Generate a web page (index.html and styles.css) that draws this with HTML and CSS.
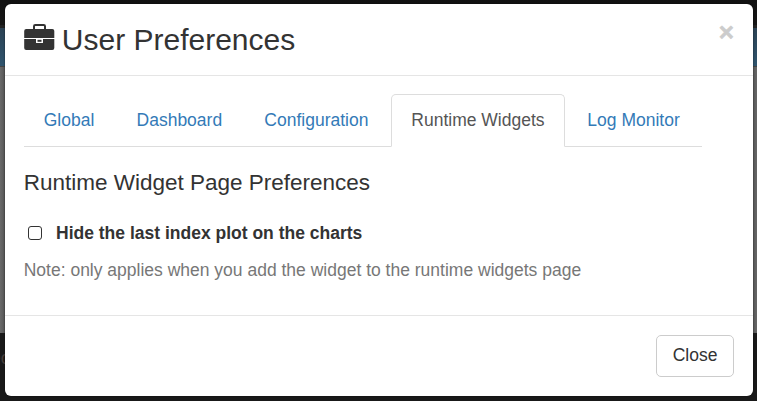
FILE: index.html
```html
<!DOCTYPE html>
<html lang="en">
<head>
<meta charset="utf-8">
<title>User Preferences</title>
<link rel="stylesheet" href="styles.css">
</head>
<body>
<div class="backdrop" aria-hidden="true">
  <div class="band-top"></div>
  <div class="band-blue"></div>
  <div class="band-page"></div>
  <div class="band-footer">ec</div>
</div>
<div class="modal" role="dialog">
  <header class="modal-header">
    <svg class="briefcase" viewBox="0 0 31 28" aria-hidden="true">
      <path d="M10 7V3.3Q10 2 11.3 2H19.7Q21 2 21 3.3V7" fill="none" stroke="#333" stroke-width="2"/>
      <path d="M2.2 6H28.3Q30.3 6 30.3 8V15H.2V8Q.2 6 2.2 6Z"/>
      <path d="M.2 16H12V20H19V16H30.3V25Q30.3 27 28.3 27H2.2Q.2 27 .2 25Z"/>
      <path d="M13.5 16.8H17.5V18.8H13.5Z"/>
    </svg>
    <h3 class="modal-title">User Preferences</h3>
    <button class="dismiss" aria-label="Dismiss">×</button>
  </header>
  <div class="modal-body">
    <nav class="tabs">
      <a class="tab">Global</a>
      <a class="tab">Dashboard</a>
      <a class="tab">Configuration</a>
      <a class="tab active">Runtime Widgets</a>
      <a class="tab">Log Monitor</a>
    </nav>
    <h4 class="section-title">Runtime Widget Page Preferences</h4>
    <label class="option"><input class="check" type="checkbox"><span>Hide the last index plot on the charts</span></label>
    <p class="note">Note: only applies when you add the widget to the runtime widgets page</p>
  </div>
  <footer class="modal-footer"><button class="close-button">Close</button></footer>
</div>
</body>
</html>
```
FILE: styles.css
```css
* { box-sizing: border-box; }
body {
  margin: 0;
  height: 401px;
  overflow: hidden;
  font-family: "Liberation Sans", Arial, sans-serif;
  font-size: 17.5px;
  line-height: 25px;
  color: #333;
  background: #111;
}
.backdrop { position: absolute; inset: 0; overflow: hidden; }
.band-top { height: 28px; background: linear-gradient(#111, #161616); border-bottom: 3px solid #222; }
.band-blue { height: 38px; background: linear-gradient(#2b4254, #2f546d); }
.band-page { height: 267px; background: linear-gradient(90deg, #6a6a6a, #555 5px, #555 752px, #666); border-top: 1px solid #444; }
.band-footer { height: 68px; padding-top: 13px; background: #191919; color: #443c38; text-indent: -9px; }
.modal {
  position: relative;
  width: 748px;
  height: 392px;
  margin: 4px 0 0 5px;
  background: #fff;
  border-radius: 6px;
  box-shadow: 0 0 2px rgba(0, 0, 0, .6);
}
.modal-header {
  display: flex;
  height: 72px;
  padding: 18px 19px 0;
  border-bottom: 1px solid #e5e5e5;
}
.briefcase { width: 31px; height: 28px; margin: 1px 0 0 -.5px; fill: #333; }
.modal-title { margin: 1px 0 0 7.3px; font-size: 30px; line-height: 33px; font-weight: 400; }
.dismiss {
  margin: -5px 0 0 auto;
  padding: 0;
  height: 30px;
  border: 0;
  background: none;
  font: bold 26px/30px "Liberation Sans", Arial, sans-serif;
  color: #ccc;
  -webkit-text-stroke: .6px #ccc;
}
.modal-body { height: 239px; padding: 18px 19px 0; }
.tabs { display: flex; width: 678px; height: 53px; border-bottom: 1px solid #ddd; }
.tab {
  height: 53px;
  margin-right: 2.7px;
  padding: 12.5px 18.75px;
  border: 1px solid transparent;
  border-radius: 5px 5px 0 0;
  color: #337ab7;
  white-space: nowrap;
}
.tab.active { padding: 12.5px 19.4px; color: #555; background: #fff; border-color: #ddd #ddd #fff; }
.section-title { margin: 23px 0 0 -.3px; font-size: 22.5px; line-height: 25px; font-weight: 400; }
.option { display: flex; align-items: center; height: 25px; margin-top: 26px; font-weight: 700; }
.check {
  appearance: none;
  width: 14px;
  height: 14px;
  margin: -1px 14px 0 4px;
  border: 1px solid #333;
  border-radius: 3px;
  background: #fff;
}
.note { margin: 12px 0 0 -.3px; color: #777; }
.modal-footer {
  display: flex;
  justify-content: flex-end;
  height: 81px;
  padding: 19px 19px 0;
  border-top: 1px solid #e5e5e5;
}
.close-button {
  width: 78px;
  height: 42px;
  padding: 0 0 2px;
  border: 1px solid #ccc;
  border-radius: 5px;
  background: #fff;
  font: 17.5px/25px "Liberation Sans", Arial, sans-serif;
  color: #333;
}
```
